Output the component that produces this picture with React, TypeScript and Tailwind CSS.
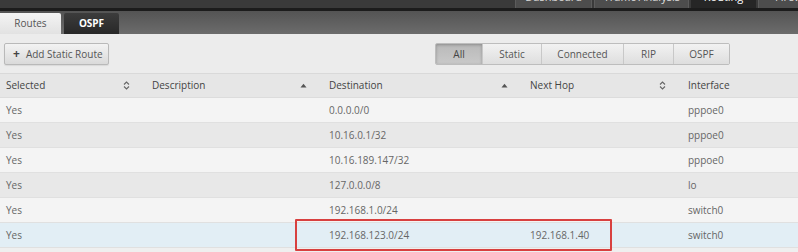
import React from 'react';

const rows = [
  { sel: 'Yes', dest: '0.0.0.0/0', hop: '', iface: 'pppoe0' },
  { sel: 'Yes', dest: '10.16.0.1/32', hop: '', iface: 'pppoe0' },
  { sel: 'Yes', dest: '10.16.189.147/32', hop: '', iface: 'pppoe0' },
  { sel: 'Yes', dest: '127.0.0.0/8', hop: '', iface: 'lo' },
  { sel: 'Yes', dest: '192.168.1.0/24', hop: '', iface: 'switch0' },
  { sel: 'Yes', dest: '192.168.123.0/24', hop: '192.168.1.40', iface: 'switch0' },
];

const cols = 'grid grid-cols-[146px_177px_201px_158px_1fr]';

const SortBoth = () => (
  <svg width="7" height="9" viewBox="0 0 7 9" className="text-[#666]">
    <path d="M1 3.5 L3.5 1 L6 3.5" fill="none" stroke="currentColor" strokeWidth="1.1" />
    <path d="M1 5.5 L3.5 8 L6 5.5" fill="none" stroke="currentColor" strokeWidth="1.1" />
  </svg>
);

const SortUp = () => (
  <svg width="7" height="5" viewBox="0 0 7 5" className="text-[#555]">
    <path d="M0.5 4.5 L3.5 0.8 L6.5 4.5 Z" fill="currentColor" />
  </svg>
);

const HeaderCell = ({ label, icon }: { label: string; icon: React.ReactNode }) => (
  <div className="flex items-center justify-between pl-[6px] pr-[16px]">
    <span>{label}</span>
    {icon}
  </div>
);

const filters = [
  { label: 'All', w: 'w-[46px]', active: true },
  { label: 'Static', w: 'w-[59px]' },
  { label: 'Connected', w: 'w-[82px]' },
  { label: 'RIP', w: 'w-[50px]' },
  { label: 'OSPF', w: 'w-[56px]' },
];

export default function App() {
  return (
    <div className="relative w-[798px] h-[252px] overflow-hidden bg-[#ececec] font-['Open_Sans',sans-serif] text-[10px] text-[#555]">
      {/* top nav, mostly scrolled off */}
      <div className="h-[8px] bg-[#3a3a3a] flex gap-[2px] pl-[515px] overflow-hidden">
        <div className="w-[81px] h-[8px] bg-[#4d4d4d] border-x border-[#5c5c5c] flex items-end justify-center text-[#ddd] text-[11px] leading-[20px]">
          <span className="mb-[1px]">Dashboard</span>
        </div>
        <div className="w-[99px] h-[8px] bg-[#4d4d4d] border-x border-[#5c5c5c] flex items-end justify-center text-[#ddd] text-[11px] leading-[20px]">
          <span className="mb-[1px]">Traffic Analysis</span>
        </div>
        <div className="w-[68px] h-[8px] bg-[#262626] flex items-end justify-center text-white text-[11px] leading-[20px]">
          <span className="mb-[1px]">Routing</span>
        </div>
        <div className="w-[40px] h-[8px] bg-[#4d4d4d] border-l border-[#5c5c5c] flex items-end pl-[16px] text-[#ddd] text-[11px] leading-[20px] shrink-0">
          <span className="mb-[1px]">Firewall</span>
        </div>
      </div>
      <div className="h-[3px] bg-[#1c1c1c]" />

      {/* sub tabs */}
      <div className="h-[23px] bg-gradient-to-b from-[#545454] to-[#6c6c6c] flex items-end gap-[3px]">
        <div className="w-[61px] h-[21px] bg-gradient-to-b from-[#f4f4f4] to-[#e2e2e2] rounded-tr-[2px] flex items-center justify-center text-[10px] text-[#555]">
          Routes
        </div>
        <div className="w-[55px] h-[21px] bg-gradient-to-b from-[#3c3c3c] to-[#282828] rounded-t-[2px] flex items-center justify-center text-[10px] font-bold text-white">
          OSPF
        </div>
      </div>

      {/* toolbar */}
      <div className="h-[39px] flex items-start pt-[9px] pl-[4px]">
        <div className="w-[105px] h-[22px] rounded-[2px] border border-[#b9b9b9] bg-gradient-to-b from-[#f3f3f3] to-[#dadada] flex items-center pl-[8px] gap-[6px] text-[10px] text-[#555] shadow-[0_1px_1px_rgba(0,0,0,0.08)]">
          <span className="font-bold text-[12px] leading-none text-[#444]">+</span>
          <span>Add Static Route</span>
        </div>
        <div className="ml-[326px] flex h-[22px] rounded-[2px] border border-[#bdbdbd] overflow-hidden">
          {filters.map((f, i) => (
            <div
              key={f.label}
              className={
                'h-full flex items-center justify-center text-[10px] ' +
                f.w +
                (i > 0 ? ' border-l border-[#c8c8c8]' : '') +
                (f.active
                  ? ' bg-gradient-to-b from-[#b9b9b9] to-[#c9c9c9] shadow-[inset_0_1px_3px_rgba(0,0,0,0.25)] text-[#444]'
                  : ' bg-gradient-to-b from-[#f2f2f2] to-[#dedede] text-[#555]')
              }
            >
              {f.label}
            </div>
          ))}
        </div>
      </div>

      {/* table */}
      <div className="border-t border-[#d9d9d9]">
        <div className={cols + ' h-[24px] items-center bg-[#e6e6e6] text-[#444] border-b border-[#dcdcdc]'}>
          <HeaderCell label="Selected" icon={<SortBoth />} />
          <HeaderCell label="Description" icon={<SortUp />} />
          <HeaderCell label="Destination" icon={<SortUp />} />
          <HeaderCell label="Next Hop" icon={<SortBoth />} />
          <div className="pl-[6px]">Interface</div>
        </div>
        {rows.map((r, i) => (
          <div
            key={i}
            className={
              cols +
              ' h-[25px] items-center text-[#666] border-b border-[#e0e0e0] ' +
              (i === rows.length - 1 ? 'bg-[#e2eef5]' : i % 2 === 0 ? 'bg-[#f4f4f4]' : 'bg-[#e8e8e8]')
            }
          >
            <div className="pl-[6px]">{r.sel}</div>
            <div className="pl-[6px]" />
            <div className="pl-[6px]">{r.dest}</div>
            <div className="pl-[6px]">{r.hop}</div>
            <div className="pl-[6px]">{r.iface}</div>
          </div>
        ))}
        <div className="h-[25px] bg-[#efefef]" />
      </div>

      {/* annotation */}
      <div className="absolute left-[295px] top-[219px] w-[317px] h-[32px] border-2 border-[#d8403f] rounded-[1px]" />
    </div>
  );
}
